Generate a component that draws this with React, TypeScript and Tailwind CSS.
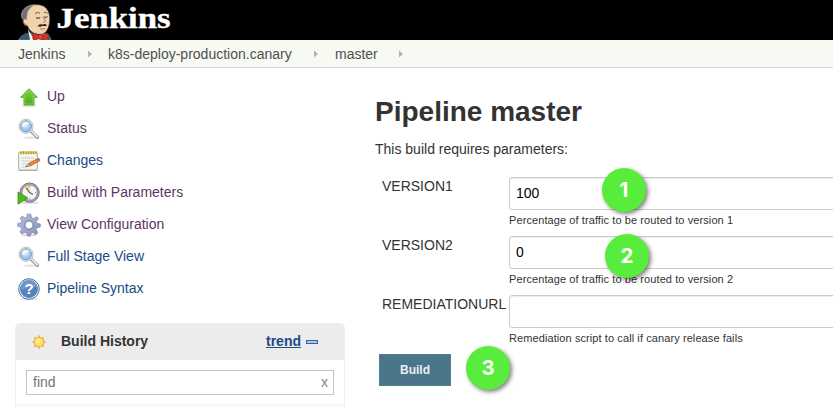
import React from 'react';

function Butler() {
  return (
    <svg className="block h-10 w-9 shrink-0" viewBox="0 0 36 40">
      <path d="M.5 40 L3 36.5 Q6 34 11 33 L28 33 Q32 35 33 40Z" fill="#35596c" stroke="#6f828c" strokeWidth=".7" />
      <path d="M10 29 L14 36 L27 34 L29 40 L12 40Z" fill="#f4f1ea" />
      <path d="M5.5 20 C4 14 6 9 11 6.5 C15 4 23 3.5 27.5 7.5 C31.5 11 32.5 18 31.5 23 C30.5 30 27 34.5 22 34.5 C16 34.5 11 31 9.5 26 C6 26 4.5 23 5.5 20Z" fill="#efd2ae" stroke="#3a3029" strokeWidth=".8" />
      <path d="M5.8 20 C2.5 18 2.6 12 6.5 8.5 C9 6 12.5 5 16.5 4.8 C12.5 7.5 9.5 10.5 9.3 14.5 L8.6 20 Z" fill="#77726f" stroke="#b8b2ae" strokeWidth=".6" />
      <path d="M7.6 19 C4.5 17.5 3.8 23 8.6 25.2" fill="#efd2ae" stroke="#6b4a38" strokeWidth=".7" />
      <path d="M17 13.4 Q19.5 11.6 22 13.2 M26 12.6 Q28 11.6 29.6 13.4" fill="none" stroke="#5b4335" strokeWidth=".8" />
      <path d="M18 17.6 Q20 19.2 22.2 17.4 M25.8 16.8 Q27.6 18.2 29.4 16.6" fill="none" stroke="#2f221c" strokeWidth="1" />
      <path d="M25 17.5 Q29.5 21.5 25.6 22.2" fill="none" stroke="#8f6144" strokeWidth=".9" />
      <path d="M19.5 26 Q21.5 23.2 24.8 24.6 Q27.5 23.2 29 25.4 Q26.5 26.8 24.6 25.8 Q22 27.4 19.5 26Z" fill="#30241f" />
      <path d="M22 28.8 Q24.5 30 27 28.4" fill="none" stroke="#8f5a45" strokeWidth=".8" />
      <path d="M15 33.5 Q14 39 16 40.5 L21 38.5 L26 40.5 Q31 39 31 34.5 L28.5 33.5 L23 36 L17.5 33.5Z" fill="#d9302b" stroke="#761a18" strokeWidth=".6" />
      <ellipse cx="22.5" cy="37" rx="2.2" ry="2.6" fill="#ef4740" stroke="#761a18" strokeWidth=".5" />
    </svg>
  );
}

function UpIcon() {
  return (
    <svg className="h-6 w-6" viewBox="0 0 24 24">
      <defs><linearGradient id="up" x2="0" y2="1"><stop stopColor="#84d63f" /><stop offset="1" stopColor="#44a81a" /></linearGradient></defs>
      <ellipse cx="12" cy="20.6" rx="8" ry="1.3" fill="#ccc" opacity=".6" />
      <path d="M12 3.7 L20.3 12.3 H17 V20 H7 V12.3 H3.7Z" fill="url(#up)" stroke="#4aa61f" strokeWidth=".9" strokeLinejoin="round" />
      <path d="M6 11.4 L12 5.2 L18 11.4 H16 V19 H8 V11.4Z" fill="none" stroke="#a4e471" strokeWidth=".6" />
    </svg>
  );
}

function SearchIcon() {
  return (
    <svg className="h-6 w-6" viewBox="0 0 24 24">
      <defs><radialGradient id="lens" cx=".4" cy=".3"><stop stopColor="#f4f9ff" /><stop offset=".6" stopColor="#c8dff8" /><stop offset="1" stopColor="#9fc5f0" /></radialGradient></defs>
      <ellipse cx="14" cy="20.8" rx="8" ry="1.5" fill="#e9e9e9" />
      <path d="M14 14 L20.4 20.2" stroke="#999b97" strokeWidth="3.6" strokeLinecap="round" />
      <path d="M14.8 14.4 L20.3 19.8" stroke="#e6e6e3" strokeWidth="2" strokeLinecap="round" />
      <circle cx="9" cy="9.3" r="7.1" fill="#f1f1ef" stroke="#b0b2ae" strokeWidth=".8" />
      <circle cx="9" cy="9.3" r="5.5" fill="url(#lens)" stroke="#7297c4" strokeWidth="1" />
      <path d="M5.2 9.2 Q5.6 5.2 9.6 5.2 Q11.6 5.2 12.6 6.8 Q8.6 6.3 7 9.6Z" fill="#fff" opacity=".8" />
    </svg>
  );
}

function NotesIcon() {
  return (
    <svg className="h-6 w-6" viewBox="0 0 24 24">
      <rect x="1.7" y="3.5" width="18.6" height="18" rx=".6" fill="#f6f6f4" stroke="#a0a29d" strokeWidth=".9" />
      <path d="M2 20.4 H20" stroke="#cfd0cc" />
      <path d="M4.5 9 H17.5 M4.5 12 H15 M4.5 15 H11 M4.5 18 H9" stroke="#c3c5c0" strokeWidth=".8" />
      <rect x="3" y="2.5" width="16.4" height="2.6" fill="#e6cd62" />
      <path d="M4 2 V5.2 M6.5 2 V5.2 M9 2 V5.2 M11.5 2 V5.2 M14 2 V5.2 M16.5 2 V5.2 M19 2 V5.2" stroke="#a98d2c" strokeWidth=".9" />
      <path d="M11.4 14.6 L20.6 9.6 Q23 9.2 22.9 11.6 L13.4 16.9Z" fill="#f08a2c" stroke="#a9561a" strokeWidth=".7" />
      <path d="M8.8 17.8 L11.4 14.6 L13.4 16.9Z" fill="#ecc68a" stroke="#675642" strokeWidth=".5" />
      <path d="M8.8 17.8 L9.9 16.5 L10.8 17.4Z" fill="#333" />
      <path d="M19.3 10.3 L20.6 9.6 Q23 9.2 22.9 11.6 L21.3 12.5Z" fill="#db6152" />
    </svg>
  );
}

function ClockIcon() {
  return (
    <svg className="h-6 w-6" viewBox="0 0 24 24">
      <ellipse cx="13" cy="21.8" rx="9" ry="1.2" fill="#ddd" />
      <circle cx="12.6" cy="11.6" r="9.6" fill="#a5a1b8" stroke="#77738c" strokeWidth="1" />
      <circle cx="12.6" cy="11.6" r="7.6" fill="#f6f6f2" stroke="#8d89a2" strokeWidth=".7" />
      <path d="M12.6 11.6 V4.2 A7.4 7.4 0 0 0 7 6.8Z" fill="#ecd97c" />
      <path d="M9.4 7 L12.6 11.6 L16 13.6" fill="none" stroke="#6a6455" strokeWidth="1.2" />
      <path d="M12.6 4.6 V6 M19.4 11.6 H18 M12.6 18.6 V17.2" stroke="#888" strokeWidth=".9" />
      <path d="M1 11 L11 17 L1 23.2Z" fill="#4fb81f" stroke="#37921a" strokeWidth=".8" strokeLinejoin="round" />
    </svg>
  );
}

function GearIcon() {
  return (
    <svg className="h-6 w-6" viewBox="0 0 24 24">
      <defs><linearGradient id="gear" x2="1" y2="1"><stop stopColor="#b9c2de" /><stop offset="1" stopColor="#8791b8" /></linearGradient></defs>
      <ellipse cx="12" cy="22" rx="8" ry="1.3" fill="#ddd" />
      <path fillRule="evenodd" d="M10.2 1.2 H13.8 L14.5 4.8 L16.5 5.7 L19.6 3.7 L21.4 5.6 L19.3 8.6 L20 10.5 L23.3 11 V14 L19.9 14.7 L19 16.7 L20.9 19.7 L18.7 21.6 L15.9 19.4 L14 20.1 L13.4 23 H10.5 L9.8 20.1 L7.8 19.3 L4.9 21 L2.9 18.9 L4.8 16.1 L4 14.1 L.8 13.4 V10.4 L4 9.9 L4.9 7.9 L3.2 5 L5.4 3.1 L8 5.1 L9.7 4.5Z M12 8.2 A3.9 3.9 0 1 0 12 16 A3.9 3.9 0 1 0 12 8.2Z" fill="url(#gear)" stroke="#7783aa" strokeWidth=".7" />
      <circle cx="12" cy="12.1" r="4.7" fill="none" stroke="#8993b8" strokeWidth="1" />
    </svg>
  );
}

function HelpIcon() {
  return (
    <svg className="h-6 w-6" viewBox="0 0 24 24">
      <ellipse cx="12" cy="22" rx="9" ry="1.2" fill="#ddd" />
      <circle cx="12" cy="12" r="10.3" fill="#edf3fa" stroke="#4a73a8" strokeWidth="1" />
      <circle cx="12" cy="12" r="8.5" fill="#5483bd" stroke="#3c689f" strokeWidth=".7" />
      <path d="M4 10 A8 8 0 0 1 20 10 Q12 10 4 13Z" fill="#84a5d0" opacity=".6" />
      <text x="12" y="17.2" textAnchor="middle" className="fill-white font-['Liberation_Sans',sans-serif] text-[15px] font-bold">?</text>
    </svg>
  );
}

function SunIcon() {
  return (
    <svg className="h-4 w-4" viewBox="0 0 16 16">
      <path d="M8 .8 L9.7 3.6 L13.1 2.9 L12.4 6.3 L15.2 8 L12.4 9.7 L13.1 13.1 L9.7 12.4 L8 15.2 L6.3 12.4 L2.9 13.1 L3.6 9.7 L.8 8 L3.6 6.3 L2.9 2.9 L6.3 3.6Z" fill="#f5ae4c" />
      <circle cx="8" cy="8" r="4.5" fill="#ffe26a" stroke="#f1b045" strokeWidth=".8" />
      <circle cx="7" cy="7" r="2.2" fill="#fff09a" />
    </svg>
  );
}

const tasks = [
  { label: 'Up', Icon: UpIcon, visited: true },
  { label: 'Status', Icon: SearchIcon, visited: true },
  { label: 'Changes', Icon: NotesIcon, visited: false },
  { label: 'Build with Parameters', Icon: ClockIcon, visited: true },
  { label: 'View Configuration', Icon: GearIcon, visited: true },
  { label: 'Full Stage View', Icon: SearchIcon, visited: false },
  { label: 'Pipeline Syntax', Icon: HelpIcon, visited: false },
];

const params = [
  { name: 'VERSION1', value: '100', help: 'Percentage of traffic to be routed to version 1' },
  { name: 'VERSION2', value: '0', help: 'Percentage of traffic to be routed to version 2' },
  { name: 'REMEDIATIONURL', value: '', help: 'Remediation script to call if canary release fails' },
];

function Chevron() {
  return <svg className="h-2 w-1 shrink-0" viewBox="0 0 4 8"><path d="M0 .5 L4 4 L0 7.5Z" fill="#b2b4b0" /></svg>;
}

function Marker({ n, place }: { n: number; place: string }) {
  return (
    <div className={`absolute flex h-11 w-11 items-center justify-center rounded-full bg-[#58ed3c] font-['Inter','Liberation_Sans',sans-serif] text-[20.5px] font-bold text-white shadow-[2px_2px_4px_rgba(0,0,0,0.5)] ${place}`}>
      {n}
    </div>
  );
}

export default function App() {
  return (
    <div className="relative h-[407px] w-full overflow-hidden bg-white font-['Liberation_Sans',Arial,sans-serif] text-sm text-[#333]">
      <header className="flex h-10 items-start bg-black pl-[18px]">
        <Butler />
        <svg className="h-10 w-[122px]" viewBox="0 0 122 40">
          <text x="2.5" y="28" textLength="114" lengthAdjust="spacingAndGlyphs" className="fill-white stroke-white stroke-[0.4px] font-['Liberation_Serif',serif] text-[30px] font-bold">Jenkins</text>
        </svg>
      </header>
      <nav className="flex h-7 items-center border-b border-[#d3d8cf] bg-[#f6faf2] pl-[18px] text-[#4f4f4f]">
        <span className="w-[70px]">Jenkins</span><Chevron />
        <span className="ml-4 w-[206px]">k8s-deploy-production.canary</span><Chevron />
        <span className="ml-[17px] w-16">master</span><Chevron />
      </nav>
      <div className="flex">
        <aside className="w-[375px] shrink-0 pl-[15px] pt-[13px]">
          <ul>
            {tasks.map(({ label, Icon, visited }) => (
              <li key={label} className="flex h-8 items-center gap-[6px] pl-0.5">
                <Icon />
                <a className={`pb-0.5 ${visited ? 'text-[#5c3566]' : 'text-[#204a87]'}`}>{label}</a>
              </li>
            ))}
          </ul>
          <section className="mt-[18px] h-[100px] w-[330px] rounded-t-[5px] border border-[#eee]">
            <div className="flex h-9 items-center bg-[#ececec] pl-[15px] font-bold">
              <SunIcon />
              <span className="ml-3.5 w-[205px] pb-0.5">Build History</span>
              <a className="pb-0.5 text-[#204a87] underline">trend</a>
              <span className="ml-[5px] h-1 w-3 border border-[#3465a4] bg-[#a5c5e8]" />
            </div>
            <div className="h-[43px] px-2.5 pt-2.5">
              <div className="flex h-[25px] items-center justify-between border border-[#c4c4c4] px-1.5 text-[#757575]">
                <span className="pb-0.5">find</span><span className="mr-[-1px] pb-px text-[#888]">x</span>
              </div>
            </div>
            <div className="h-5 bg-[#f8f8f8]" />
          </section>
        </aside>
        <main className="w-[600px] shrink-0 pt-[26px]">
          <h1 className="h-9 text-[28px] leading-9 font-bold">Pipeline master</h1>
          <p className="mt-[9px] h-5 leading-5">This build requires parameters:</p>
          <div className="mt-[18px]">
            {params.map((p) => (
              <div key={p.name} className="flex h-[59px] pl-[7px]">
                <label className="w-[127px] shrink-0 leading-[18px]">{p.name}</label>
                <div className="grow">
                  <div className="flex h-[33px] items-center rounded-[3px] border border-[#ccc] px-1.5 pb-px text-black shadow-[inset_0_1px_1px_rgba(0,0,0,0.075)]">{p.value}</div>
                  <div className="h-5 text-[11px] leading-5 tracking-[0.09px]">{p.help}</div>
                </div>
              </div>
            ))}
          </div>
          <button className="ml-1 block h-8 w-[72px] border border-[#4b8195] bg-[#4b758b] text-xs font-bold text-[#eee]">Build</button>
        </main>
      </div>
      <Marker n={1} place="left-[602px] top-[168px]" />
      <Marker n={2} place="left-[605px] top-[234px]" />
      <Marker n={3} place="left-[466px] top-[346px]" />
    </div>
  );
}
